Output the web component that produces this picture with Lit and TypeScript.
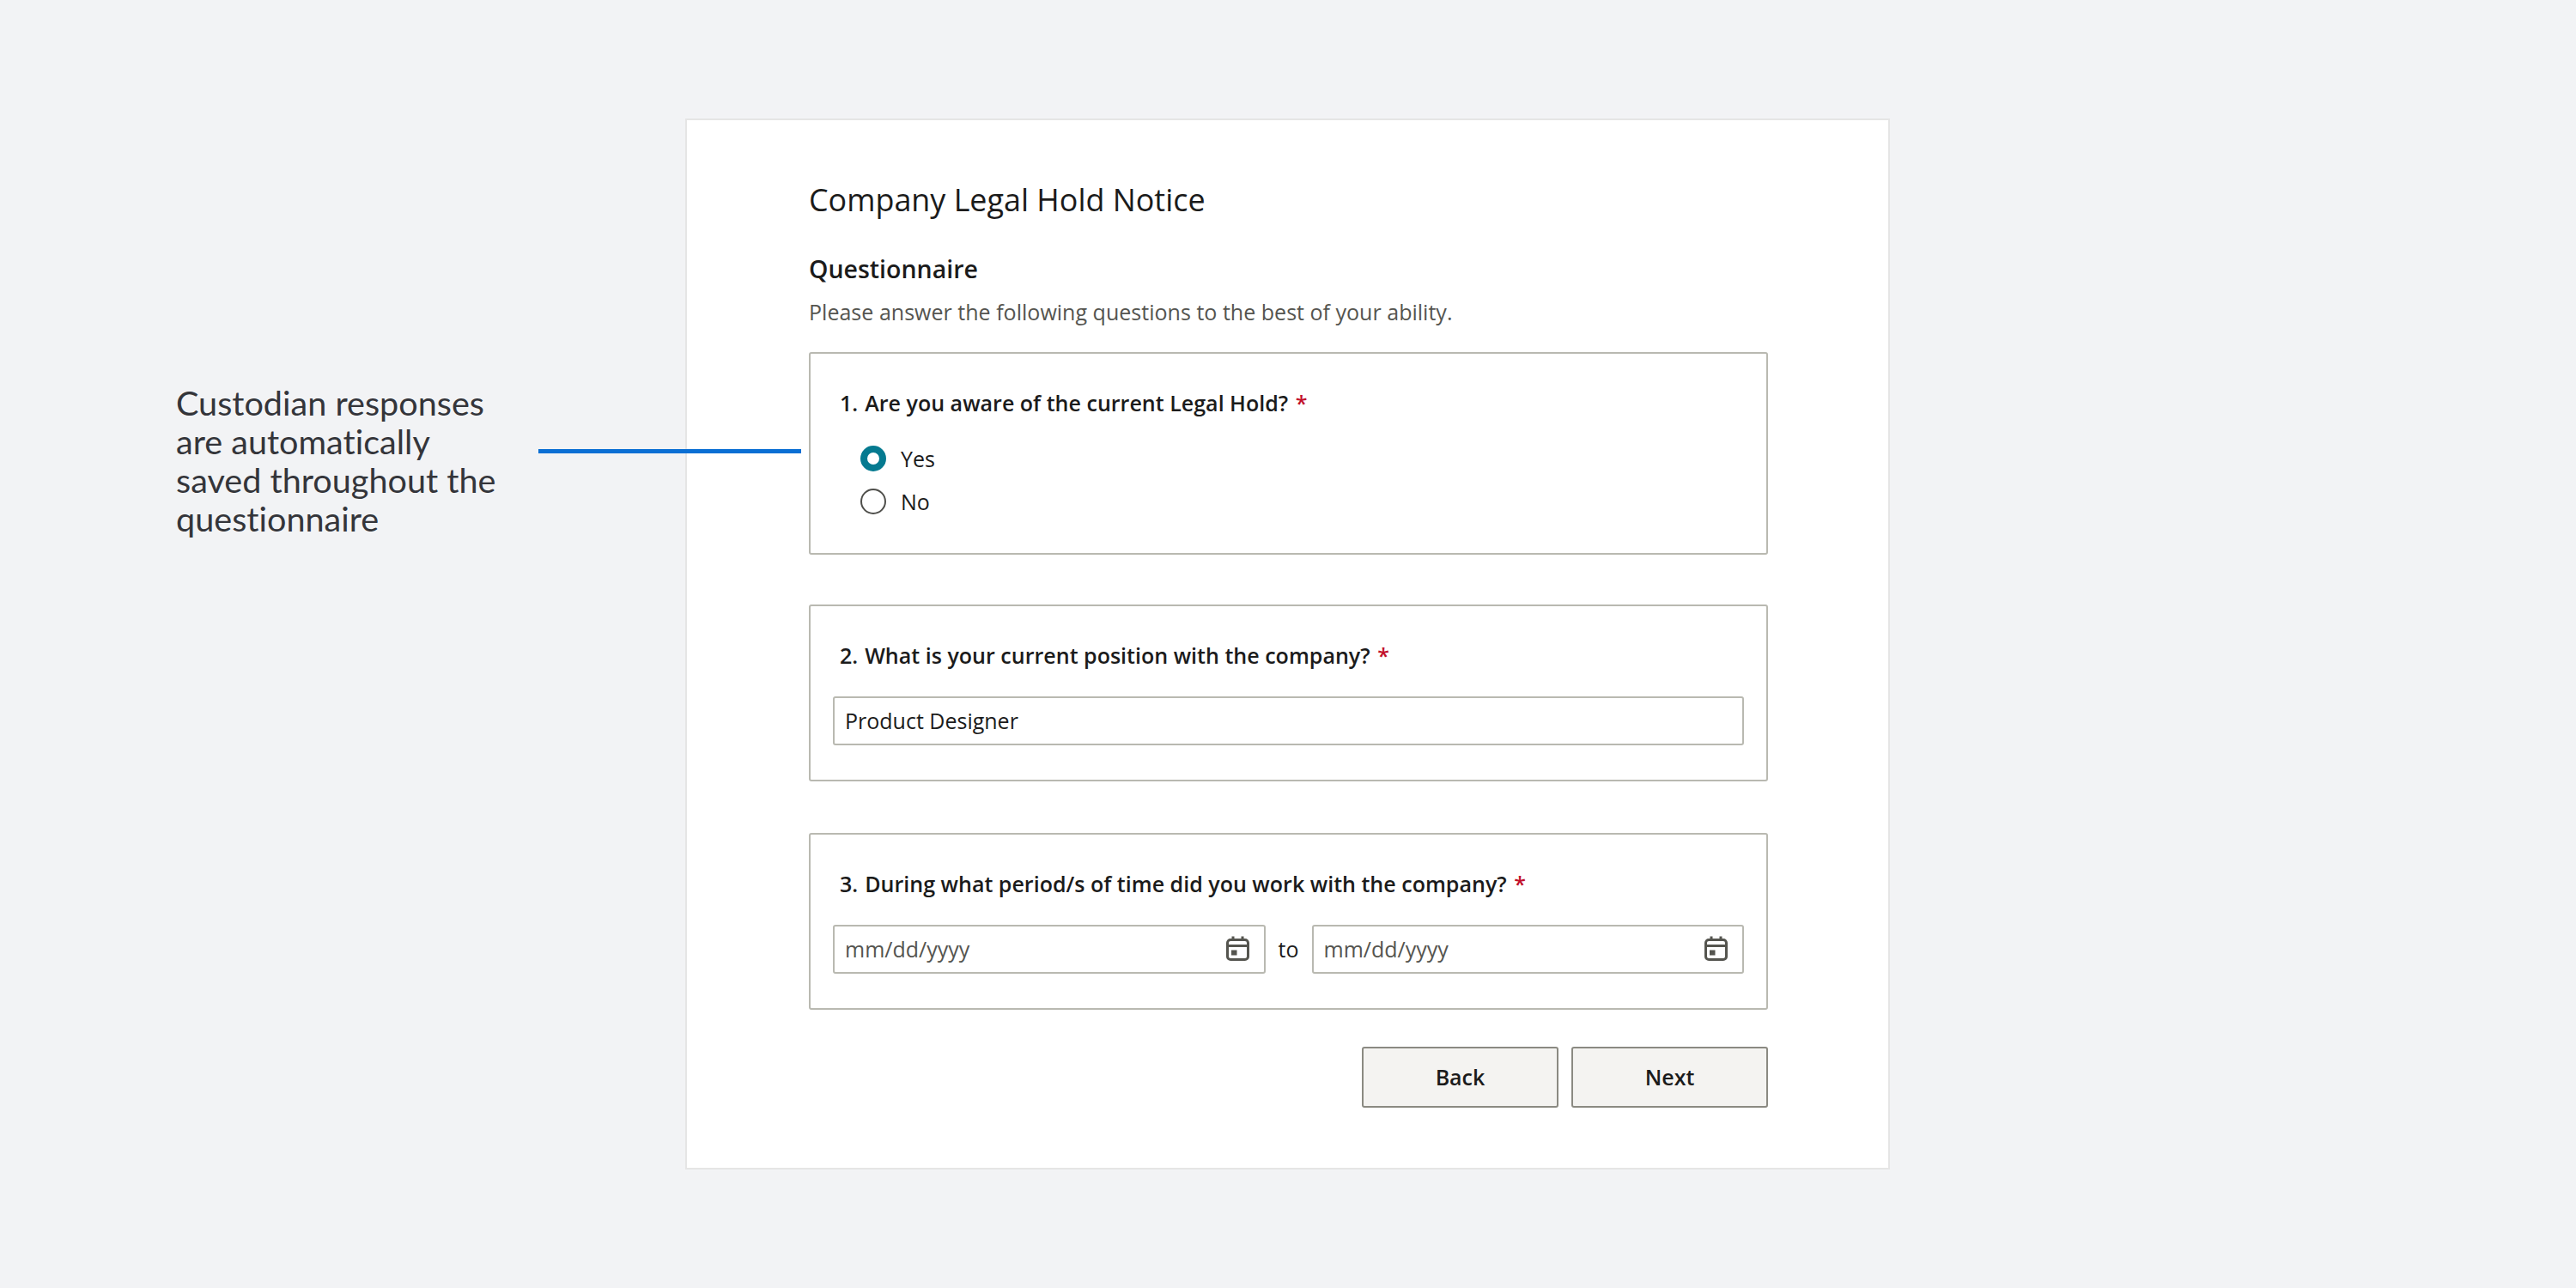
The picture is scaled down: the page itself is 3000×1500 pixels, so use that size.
import { LitElement, html, css } from "lit";
import { customElement } from "lit/decorators.js";

const calendar = html`<svg class="cal" viewBox="0 0 27 29" width="27" height="29" fill="none" stroke="#55554f" stroke-width="3">
  <rect x="1.5" y="4.5" width="24" height="23" rx="3.6"></rect>
  <path d="M1.5 11.6H25.5M8 .5V6M19 .5V6"></path>
  <rect x="6" y="16.5" width="6.5" height="6" fill="#55554f" stroke="none"></rect>
</svg>`;

@customElement("app-root")
export class AppRoot extends LitElement {
  static styles = css`
    :host {
      display: block;
      min-height: 1500px;
      background: #f2f3f5;
      font-family: "Open Sans", sans-serif;
      color: #1b1b1b;
    }
    * { box-sizing: border-box; }
    .page {
      display: flex;
      align-items: flex-start;
      padding: 138px 0 0 205px;
    }
    .note {
      position: relative;
      width: 593px;
      flex: none;
      margin-top: 308px;
      font-family: "Lato", sans-serif;
      font-size: 39.6px;
      line-height: 45px;
      color: #34353a;
      font-variant-ligatures: none;
    }
    .note p { margin: 0; width: 385px; }
    .line {
      position: absolute;
      left: 422px;
      top: 77px;
      width: 306px;
      height: 5px;
      background: #0a6fd4;
      z-index: 1;
    }
    .card {
      width: 1403px;
      height: 1224px;
      flex: none;
      background: #fff;
      border: 2px solid #e5e5e5;
      padding: 65px 140px 0 142px;
    }
    h1 {
      margin: 0;
      font-size: 35.9px;
      line-height: 56px;
      font-weight: 400;
    }
    h2 {
      margin: 28px 0 0;
      font-size: 28.5px;
      line-height: 50px;
      font-weight: 600;
      position: relative;
      top: -1px;
    }
    .sub {
      margin: 0 0 23px;
      font-size: 25.05px;
      line-height: 48px;
      color: #555550;
    }
    .box {
      border: 2px solid #b9b9b1;
      border-radius: 3px;
      padding: 0 26px;
    }
    .box.q1 { height: 236px; margin-bottom: 58px; }
    .box.q2 { height: 206px; margin-bottom: 60px; }
    .box.q3 { height: 206px; margin-bottom: 43px; }
    .q {
      margin: 0;
      padding: 37px 0 0 8px;
      font-size: 25.05px;
      line-height: 40px;
      font-weight: 600;
      display: flex;
      gap: 8px;
    }
    .req { color: #c2102b; margin-left: 2px; }
    .options {
      display: flex;
      flex-direction: column;
      gap: 14px;
      padding: 27px 0 0 32px;
    }
    .opt {
      display: flex;
      align-items: center;
      gap: 17px;
      font-size: 25px;
      line-height: 36px;
    }
    .radio {
      width: 30px;
      height: 30px;
      border-radius: 50%;
      border: 2.5px solid #4f4f4b;
      background: #fff;
    }
    .radio.on { border: 8px solid #057a90; }
    .input {
      height: 57px;
      border: 2px solid #b9b9b1;
      border-radius: 3px;
      padding: 0 12px 2px;
      font-size: 25px;
      display: flex;
      align-items: center;
      justify-content: space-between;
      background: #fff;
    }
    .field { margin-top: 28px; }
    .dates {
      display: flex;
      align-items: center;
      margin-top: 28px;
    }
    .dates .input { flex: 1; color: #555550; padding-right: 17px; }
    .to { width: 54px; text-align: center; font-size: 25px; padding-bottom: 2px; }
    .cal { display: block; flex: none; }
    .actions {
      display: flex;
      justify-content: flex-end;
      gap: 15px;
    }
    button {
      width: 229px;
      height: 71px;
      background: #f4f3f1;
      border: 2px solid #8b8a82;
      border-radius: 3px;
      font: 600 25px "Open Sans", sans-serif;
      color: #1b1b1b;
      padding: 0 0 2px;
    }
  `;

  render() {
    return html`<div class="page">
      <aside class="note">
        <p>Custodian responses are automatically saved throughout the questionnaire</p>
        <div class="line"></div>
      </aside>
      <main class="card">
        <h1>Company Legal Hold Notice</h1>
        <h2>Questionnaire</h2>
        <p class="sub">Please answer the following questions to the best of your ability.</p>
        <section class="box q1">
          <p class="q"><span>1.</span><span>Are you aware of the current Legal Hold? <span class="req">*</span></span></p>
          <div class="options">
            <div class="opt"><span class="radio on"></span>Yes</div>
            <div class="opt"><span class="radio"></span>No</div>
          </div>
        </section>
        <section class="box q2">
          <p class="q"><span>2.</span><span>What is your current position with the company? <span class="req">*</span></span></p>
          <div class="input field">Product Designer</div>
        </section>
        <section class="box q3">
          <p class="q"><span>3.</span><span>During what period/s of time did you work with the company? <span class="req">*</span></span></p>
          <div class="dates">
            <div class="input"><span>mm/dd/yyyy</span>${calendar}</div>
            <span class="to">to</span>
            <div class="input"><span>mm/dd/yyyy</span>${calendar}</div>
          </div>
        </section>
        <div class="actions">
          <button>Back</button>
          <button>Next</button>
        </div>
      </main>
    </div>`;
  }
}
